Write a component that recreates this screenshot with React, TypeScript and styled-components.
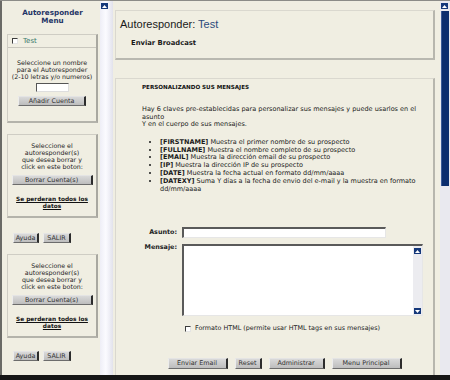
import styled, { createGlobalStyle } from 'styled-components'

const GlobalStyle = createGlobalStyle`
  html, body {
    margin: 0;
    padding: 0;
    background: #f0eee2;
  }
  body {
    font-family: "DejaVu Sans", Verdana, sans-serif;
    color: #1a1a1a;
  }
`;

const Window = styled.div`
  width: 450px;
  height: 380px;
  display: flex;
  flex-direction: column;
  overflow: hidden;
  box-sizing: border-box;
  border-top: 1px solid #8c8c88;
  background: #f0eee2;
`;

const Frames = styled.div`
  display: flex;
  flex: 1;
  min-height: 0;
`;

const BottomBar = styled.div`
  height: 5px;
  background: #161616;
`;

const Sidebar = styled.div`
  width: 100px;
  box-sizing: border-box;
  border-left: 2px solid #6a6a66;
  padding: 8px 0 0 5px;
  display: flex;
  flex-direction: column;
`;

const ScrollTrack = styled.div<{ $width: number; $soft?: boolean }>`
  width: ${p => p.$width}px;
  flex-shrink: 0;
  display: flex;
  flex-direction: column;
  align-items: flex-start;
  padding: 2px 0 0 1px;
  box-sizing: border-box;
  background: ${p => p.$soft
    ? 'linear-gradient(90deg, #eeeef6 0%, #fbfbff 45%, #e2e2ec 100%)'
    : '#e9e9ef'};
`;

const Thumb = styled.div<{ $height: number }>`
  margin-top: 2px;
  width: 8px;
  height: ${p => p.$height}px;
  background: #0b2d6e;
  box-shadow: inset 1px 0 0 #3a5a96;
`;

const ArrowBox = styled.div`
  width: 7px;
  height: 6px;
  background: #15387a;
  display: flex;
  align-items: center;
  justify-content: center;
`;

const Arrow = ({ down }: { down?: boolean }) => (
  <ArrowBox>
    <svg width="5" height="3" viewBox="0 0 5 3">
      <path d={down ? 'M0 0 L5 0 L2.5 3 Z' : 'M0 3 L5 3 L2.5 0 Z'} fill="#ffffff" />
    </svg>
  </ArrowBox>
);

const MenuTitle = styled.div`
  width: 91px;
  text-align: center;
  font-weight: bold;
  font-size: 7.2px;
  line-height: 8px;
  color: #1f3566;
`;

const SideBox = styled.div<{ $top: number }>`
  margin-top: ${p => p.$top}px;
  width: 91px;
  box-sizing: border-box;
  border: 1px solid #cfcdc4;
  border-right: 2px solid #a9a8a0;
  border-bottom: 2px solid #b4b3ab;
  display: flex;
  flex-direction: column;
  align-items: center;
`;

const NameRow = styled.label`
  align-self: stretch;
  height: 12px;
  display: flex;
  align-items: center;
  gap: 5px;
  padding-left: 4px;
  border-bottom: 1px solid #c9c7be;
  font-size: 7px;
  color: #3b7a6c;
`;

const Check = styled.input.attrs({ type: 'checkbox' })`
  appearance: none;
  margin: 0;
  width: 6px;
  height: 6px;
  box-sizing: border-box;
  background: #ffffff;
  border-top: 1px solid #3c3c3c;
  border-left: 1px solid #3c3c3c;
  border-right: 1px solid #e4e4e4;
  border-bottom: 1px solid #e4e4e4;
`;

const SideText = styled.div<{ $top: number }>`
  margin-top: ${p => p.$top}px;
  text-align: center;
  font-size: 6.3px;
  line-height: 7px;
  color: #222222;
`;

const Warning = styled.a`
  display: block;
  margin-top: 11px;
  text-align: center;
  font-size: 5.8px;
  line-height: 7px;
  font-weight: bold;
  color: #111111;
  text-decoration: underline;
`;

const SideInput = styled.input`
  margin-top: 3px;
  width: 33px;
  height: 9px;
  padding: 0;
  box-sizing: border-box;
  background: #ffffff;
  border-top: 1px solid #555555;
  border-left: 1px solid #555555;
  border-right: 1px solid #dedede;
  border-bottom: 1px solid #dedede;
`;

const Button = styled.button<{ $width: number; $top?: number; $height?: number }>`
  margin-top: ${p => p.$top ?? 0}px;
  width: ${p => p.$width}px;
  height: ${p => p.$height ?? 11}px;
  padding: 0;
  box-sizing: border-box;
  font-family: "DejaVu Sans", Verdana, sans-serif;
  font-size: 6.4px;
  line-height: 8px;
  color: #333333;
  background: linear-gradient(#d9d9d9, #bdbdbd);
  border: none;
  border-left: 1px solid #ececec;
  border-top: 1px solid #e4e4e4;
  border-right: 2px solid #2c2c2c;
  border-bottom: 1px solid #6c6c6c;
`;

const SideButtons = styled.div<{ $top: number }>`
  margin-top: ${p => p.$top}px;
  padding-left: 6px;
  display: flex;
  gap: 4px;
`;

const Main = styled.div`
  flex: 1;
  min-width: 0;
  padding: 9px 5px 0 2px;
  overflow: hidden;
  display: flex;
  flex-direction: column;
  gap: 18px;
`;

const Card = styled.section`
  box-sizing: border-box;
  border: 1px solid #dad8cf;
  border-right: 2px solid #b7b6ae;
  border-bottom: 2px solid #b9b8b0;
  background: #f0eee2;
`;

const HeaderCard = styled(Card)`
  height: 50px;
  padding: 7px 0 0 4px;
`;

const PageTitle = styled.h1`
  margin: 0;
  font-family: "Liberation Sans", Arial, sans-serif;
  font-weight: normal;
  font-size: 11px;
  line-height: 13px;
  color: #1a1a1a;
`;

const Accent = styled.span`
  color: #2b4a7c;
`;

const SubTitle = styled.h2`
  margin: 8px 0 0 11px;
  font-size: 6.8px;
  line-height: 8px;
  font-weight: bold;
  color: #1a1a1a;
`;

const BodyCard = styled(Card)`
  flex: 1;
  border-bottom: none;
  padding: 5px 10px 0 26px;
  font-size: 6.5px;
  line-height: 7.6px;
`;

const SectionHead = styled.h3`
  margin: 0;
  font-size: 5.6px;
  line-height: 7px;
  font-weight: bold;
  color: #111111;
`;

const Para = styled.p`
  margin: 15px 0 0;
`;

const KeyList = styled.ul`
  margin: 10px 0 0;
  padding-left: 18px;
  list-style: disc;
  line-height: 7.8px;
`;

const Key = styled.b`
  font-size: 6.5px;
`;

const Form = styled.div`
  margin-top: 34px;
  display: grid;
  grid-template-columns: 35px 1fr;
  column-gap: 5px;
  row-gap: 6px;
  align-items: center;
`;

const FieldLabel = styled.label<{ $alignTop?: boolean }>`
  justify-self: end;
  align-self: ${p => (p.$alignTop ? 'start' : 'center')};
  font-weight: bold;
  font-size: 6.4px;
  color: #222222;
`;

const TextField = styled.input`
  width: 204px;
  height: 11px;
  box-sizing: border-box;
  padding: 0;
  background: #ffffff;
  border-top: 2px solid #5a5a5a;
  border-left: 2px solid #5a5a5a;
  border-right: 1px solid #e6e6e6;
  border-bottom: 1px solid #e6e6e6;
`;

const MessageBox = styled.div`
  width: 241px;
  height: 72px;
  box-sizing: border-box;
  display: flex;
  background: #ffffff;
  border-top: 2px solid #5a5a5a;
  border-left: 2px solid #5a5a5a;
  border-right: 1px solid #e6e6e6;
  border-bottom: 1px solid #e6e6e6;
`;

const MessageArea = styled.textarea`
  flex: 1;
  border: none;
  outline: none;
  resize: none;
  padding: 0;
  background: #ffffff;
`;

const InnerScroll = styled.div`
  width: 9px;
  display: flex;
  flex-direction: column;
  justify-content: space-between;
  align-items: center;
  padding: 2px 0 1px;
  background: #ececf0;
`;

const HtmlOption = styled.label`
  grid-column: 2;
  margin-top: 3px;
  padding-left: 3px;
  display: flex;
  align-items: center;
  gap: 4px;
  font-size: 6.4px;
  color: #222222;
`;

const ActionRow = styled.div`
  margin-top: 25px;
  display: flex;
  justify-content: center;
  gap: 7px;
  padding-left: 4px;
`;

const keys = [
  { key: '[FIRSTNAME]', text: 'Muestra el primer nombre de su prospecto' },
  { key: '[FULLNAME]', text: 'Muestra el nombre completo de su prospecto' },
  { key: '[EMAIL]', text: 'Muestra la dirección email de su prospecto' },
  { key: '[IP]', text: 'Muestra la dirección IP de su prospecto' },
  { key: '[DATE]', text: 'Muestra la fecha actual en formato dd/mm/aaaa' },
  { key: '[DATEXY]', text: 'Suma Y días a la fecha de envio del e-mail y la muestra en formato', more: 'dd/mm/aaaa' },
];

const DeleteBox = ({ top }: { top: number }) => (
  <SideBox $top={top}>
    <SideText $top={7}>
      Seleccione el<br />
      autoresponder(s)<br />
      que desea borrar y<br />
      click en este boton:
    </SideText>
    <Button $width={81} $top={5} $height={10}>Borrar Cuenta(s)</Button>
    <Warning>Se perderan todos los<br />datos</Warning>
    <div style={{ height: 6 }} />
  </SideBox>
);

const HelpButtons = ({ top }: { top: number }) => (
  <SideButtons $top={top}>
    <Button $width={26} $height={10}>Ayuda</Button>
    <Button $width={28} $height={10}>SALIR</Button>
  </SideButtons>
);

const App = () => {
  return (
    <>
      <GlobalStyle />
      <Window>
        <Frames>
          <Sidebar>
            <MenuTitle>Autoresponder<br />Menu</MenuTitle>
            <SideBox $top={9}>
              <NameRow><Check />Test</NameRow>
              <SideText $top={11}>
                Seleccione un nombre<br />
                para el Autoresponder<br />
                (2-10 letras y/o numeros)
              </SideText>
              <SideInput />
              <Button $width={68} $top={4} $height={10}>Añadir Cuenta</Button>
              <div style={{ height: 15 }} />
            </SideBox>
            <DeleteBox top={11} />
            <HelpButtons top={15} />
            <DeleteBox top={11} />
            <HelpButtons top={13} />
          </Sidebar>
          <ScrollTrack $width={13} $soft>
            <Arrow />
          </ScrollTrack>
          <Main>
            <HeaderCard>
              <PageTitle>Autoresponder: <Accent>Test</Accent></PageTitle>
              <SubTitle>Enviar Broadcast</SubTitle>
            </HeaderCard>
            <BodyCard>
              <SectionHead>PERSONALIZANDO SUS MENSAJES</SectionHead>
              <Para>
                Hay 6 claves pre-establecidas para personalizar sus mensajes y puede usarlos en el asunto<br />
                Y en el cuerpo de sus mensajes.
              </Para>
              <KeyList>
                {keys.map(k => (
                  <li key={k.key}>
                    <Key>{k.key}</Key> <span>{k.text}</span>
                    {k.more && <><br /><span>{k.more}</span></>}
                  </li>
                ))}
              </KeyList>
              <Form>
                <FieldLabel>Asunto:</FieldLabel>
                <TextField />
                <FieldLabel $alignTop>Mensaje:</FieldLabel>
                <MessageBox>
                  <MessageArea />
                  <InnerScroll>
                    <Arrow />
                    <Arrow down />
                  </InnerScroll>
                </MessageBox>
                <HtmlOption><Check />Formato HTML (permite usar HTML tags en sus mensajes)</HtmlOption>
              </Form>
              <ActionRow>
                <Button $width={60}>Enviar Email</Button>
                <Button $width={27}>Reset</Button>
                <Button $width={56}>Administrar</Button>
                <Button $width={70}>Menu Principal</Button>
              </ActionRow>
            </BodyCard>
          </Main>
          <ScrollTrack $width={10}>
            <Arrow />
            <Thumb $height={175} />
          </ScrollTrack>
        </Frames>
        <BottomBar />
      </Window>
    </>
  );
};

export default App;
